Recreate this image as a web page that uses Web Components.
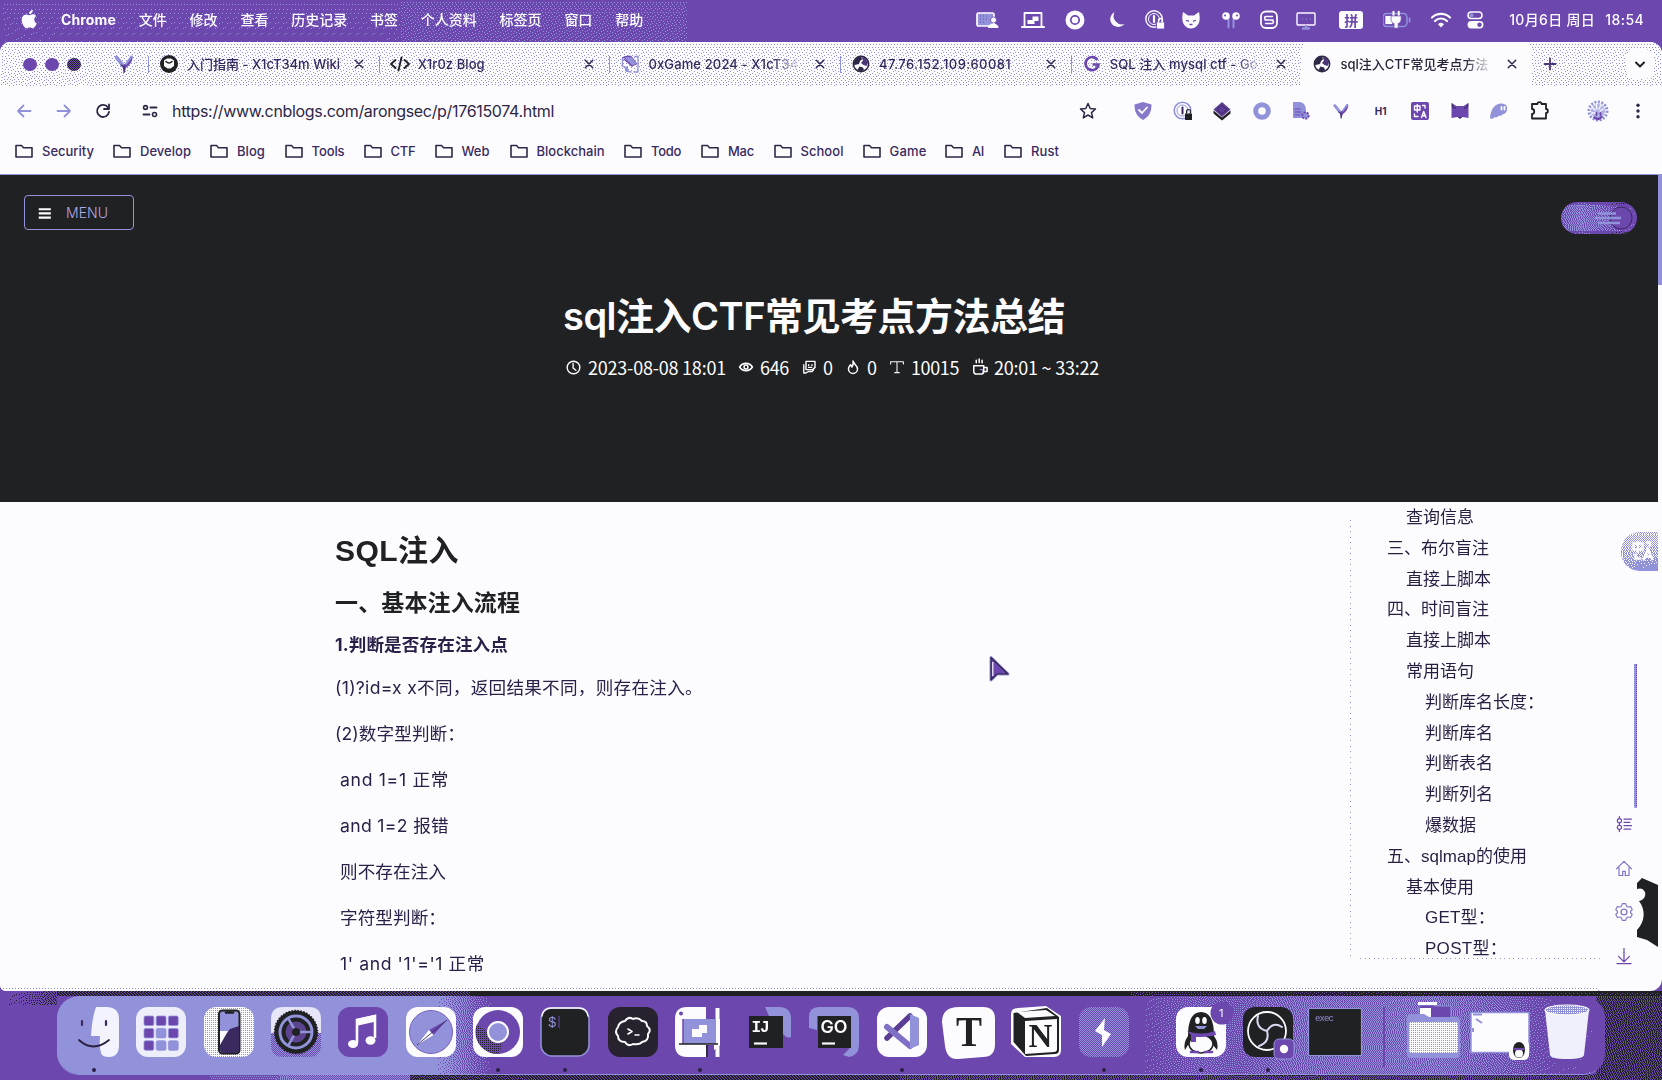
<!DOCTYPE html>
<html lang="zh-CN">
<head>
<meta charset="utf-8">
<title>sql注入CTF常见考点方法总结</title>
<style>
html,body{margin:0;padding:0;width:1662px;height:1080px;overflow:hidden}
body{background:#6c47ae;font-family:Inter,"Noto Sans CJK SC",sans-serif}
</style>
</head>
<body>
<desk-top></desk-top>
<script>
const TONES=[[32,33,34],[108,71,174],[146,146,218],[252,252,255]];
const ramp=(x,...s)=>{ // piecewise-linear lookup over x,value pairs
  if(x<=s[0])return s[1];
  for(let i=2;i<s.length;i+=2)if(x<=s[i]){const t=(x-s[i-2])/(s[i]-s[i-2]);return s[i-1]+(s[i+1]-s[i-1])*t}
  return s[s.length-1];
};
const FIELDS={
  menu:(x,y)=>x>686?1:x>400?1.13:ramp(y,0,1.07,42,1.03),
  tabs:(x,y)=>2.88-(y>30?.02:0),
  foot:(x,y)=>y<3?2.985:2.9,
  desk:(x,y)=>{
    if(x<57)return y<14?ramp(x,0,1,20,.9,57,.6):1;
    if(y<5)return x<470?.35:x<1130?0:ramp(x,1130,.2,1600,.1);
    if(x>1595)return .42;
    if(y>82)return x<210?1:x<280?1.25:x<410?1.5:x<900?.35:.55;
    return 1;
  },
  dock:(x,y)=>ramp(x,375,2,385,1.9,435,1,1080,1,1140,1.3,1180,1.25,1240,1.45,1380,1.55,1450,1.3,1500,1.02,1548,1),
  toggle:(x,y)=>ramp(x,0,1.35,20,1.6,50,1.3,76,1)-(y<3||y>28?.4:0),
  trans:(x,y)=>ramp(y,0,2.55,24,2.4,38,2.05)-(x>14&&y>25?.1:0)
};
class DitherFill extends HTMLElement{
  connectedCallback(){
    const w=+this.getAttribute('w'),h=+this.getAttribute('h'),f=FIELDS[this.getAttribute('field')];
    const r=this.attachShadow({mode:'open'});
    r.innerHTML='<style>:host{display:block;position:absolute;left:0;top:0;z-index:-1}canvas{display:block}</style><canvas></canvas>';
    const c=r.querySelector('canvas');c.width=w;c.height=h;
    const g=c.getContext('2d'),im=g.createImageData(w,h);
    let cur=new Float32Array(w+2),nxt=new Float32Array(w+2);
    for(let y=0;y<h;y++){
      for(let x=0;x<w;x++){
        const v=f(x,y)+cur[x+1];
        const q=Math.max(0,Math.min(3,Math.round(v))),e=Math.max(-1,Math.min(1,v-q));
        cur[x+2]+=e*7/16;nxt[x]+=e*3/16;nxt[x+1]+=e*5/16;nxt[x+2]+=e/16;
        const o=(y*w+x)*4,t=TONES[q];
        im.data[o]=t[0];im.data[o+1]=t[1];im.data[o+2]=t[2];im.data[o+3]=255;
      }
      cur=nxt;nxt=new Float32Array(w+2);
    }
    g.putImageData(im,0,0);
  }
}
customElements.define('dither-fill',DitherFill);

// A run of text tracked so that it spans exactly `w` pixels.
class FitText extends HTMLElement{
  connectedCallback(){
    const r=this.attachShadow({mode:'open'});
    r.innerHTML='<style>:host{display:inline-block;white-space:pre;flex:none}span{display:inline-block}</style><span><slot></slot></span>';
    const s=r.querySelector('span'),w=+this.getAttribute('w');
    if(!w)return;
    const n=[...this.textContent].length,nat=s.getBoundingClientRect().width;
    s.style.letterSpacing=((w-nat)/n).toFixed(3)+'px';
    this.style.width=w+'px';
  }
}
customElements.define('fit-text',FitText);

const K='#202122',P='#6c47ae',L='#9292da',W='#fcfcff';
const st=(c,w)=>`fill="none" stroke="${c}" stroke-width="${w}" stroke-linecap="round" stroke-linejoin="round"`;
const globe=`<circle cx="12" cy="12" r="7.600" fill="#fcfcff" stroke="#2d2745" stroke-width="1.6"/><path d="M5 10l3-4.500 4-1 1 3-2 1.500-1 3-2 .5-3 .5z" fill="#2d2745"/><path d="M12.500 5l4 1.500 2.500 4-1.500 3.500-3-1-2.500-2 2-2.500z" fill="#4c3678"/><path d="M8.500 18l2-3.500 3.500 1 1 2.500-3 1.500z" fill="#2d2745"/>`;
const ICONS={
apple:`<path fill="${W}" d="M16.200 12.600c0-2.300 1.900-3.400 2-3.500-1.100-1.600-2.800-1.800-3.400-1.800-1.400-.1-2.800.9-3.500.9s-1.900-.9-3-.8c-1.600 0-3 .9-3.800 2.300-1.600 2.800-.4 7 1.200 9.200.8 1.100 1.700 2.400 2.900 2.300 1.200 0 1.600-.7 3-.7s1.800.7 3 .7 2-1.100 2.800-2.200c.9-1.300 1.200-2.500 1.300-2.600-.1 0-2.500-1-2.500-3.800zM13.900 5.800c.6-.8 1.100-1.800.9-2.900-.9 0-2 .6-2.700 1.400-.6.7-1.100 1.800-1 2.800 1.100.1 2.100-.5 2.800-1.300z"/>`,
share:`<rect x="2" y="5" width="17" height="13" rx="1.500" fill="${L}" stroke="${W}" stroke-width="1.700"/><path d="M5 8h1M8 8h1M11 8h1M5 11h1M8 11h1M11 11h1M5 14h1M8 14h1" stroke="${P}"/><circle cx="18.500" cy="12" r="3" fill="${W}" stroke="${P}" stroke-width=".8"/><path d="M13 20c0-6 10.500-6 10.500 0z" fill="${W}"/>`,
laptop:`<path d="M3.500 18V5h17v13" ${st(W,1.8)}/><path d="M1 19h22" ${st(W,2)}/><path d="M6.500 12h5V8.500h6V13h-4v3h-7z" fill="${W}"/>`,
donut:`<circle cx="12" cy="12" r="9.500" fill="${W}"/><circle cx="12" cy="12" r="4.200" fill="${W}" stroke="${P}" stroke-width="1.700"/>`,
moon:`<path d="M9.500 4a8 8 0 1 0 10 12A8.500 8.500 0 0 1 9.500 4z" fill="${W}"/>`,
onepw:`<circle cx="11" cy="11" r="8.200" ${st(W,1.4)}/><circle cx="11" cy="11" r="5.500" ${st(W,1)}/><path d="M11 8v6" ${st(W,2.2)}/><rect x="13.500" y="14" width="8" height="7" rx="1" fill="${W}" stroke="${P}" stroke-width=".8"/><path d="M15.500 14v-1.500a2 2 0 0 1 4 0V14" ${st(W,1.3)}/>`,
cat:`<path d="M4 4l5 3.500h6L20 4c.8 4 .8 6 .5 8.500C20 17 16 20.500 12 20.500S4 17 3.500 12.500C3.200 10 3.200 8 4 4z" fill="${W}"/><path d="M7.500 12.500l2 .7M16.500 12.500l-2 .7M11 16.500h2" ${st(P,1.3)}/>`,
pods:`<path d="M9.500 11v8.500M14.500 11v8.500" ${st(L,2)}/><circle cx="7" cy="8" r="3.800" fill="${W}"/><circle cx="17" cy="8" r="3.800" fill="${W}"/><circle cx="6" cy="7.500" r="1" fill="${P}"/><circle cx="18" cy="7.500" r="1" fill="${P}"/>`,
sbox:`<rect x="4" y="3.500" width="16" height="16.500" rx="5" ${st(W,1.8)}/><path d="M15.500 8.500H9a1.500 1.500 0 0 0 0 3M8.500 15.500H15a1.500 1.500 0 0 0 0-3M8 12h8" ${st(W,1.5)}/>`,
display:`<rect x="3" y="5" width="18" height="12" rx="1" ${st(W,1.4)}/><path d="M9 20.500h6M12 18v2" ${st(L,2.4)}/><path d="M8 11h1M12 11h1M16 11h1" stroke="${L}" stroke-width="1"/>`,
batt:`<rect x="0" y="6.500" width="20.500" height="11" rx="3" fill="none" stroke="${L}" stroke-width="1.300"/><path d="M2 8.500h6v7H2z" fill="${W}"/><path d="M9 9V5M13.500 9V5" ${st(W,1.8)}/><path d="M7 8.500h8.500c.5 4-.5 6-2.500 6.500v4h-3.500v-4C7.500 14.500 6.500 12.500 7 8.500z" fill="${W}" stroke="${P}" stroke-width=".6"/><path d="M22.800 10.500v3" ${st(L,1.5)}/>`,
wifi:`<path d="M3 9.500a13 13 0 0 1 18 0M6 13a8.500 8.500 0 0 1 12 0" ${st(W,2.2)}/><path d="M9 16.200a4.300 4.300 0 0 1 6 0L12 19.500z" fill="${W}"/>`,
cc:`<rect x="5" y="4" width="14" height="6.500" rx="3.200" ${st(W,1.5)}/><circle cx="8.500" cy="7.200" r="2" fill="${L}"/><rect x="4.500" y="13" width="16" height="7.500" rx="3.700" fill="${W}"/><circle cx="16.500" cy="16.700" r="2.200" fill="${P}"/>`,
globe,
wiki:`<circle cx="12" cy="12" r="9" fill="${K}"/><path d="M7 8.500l3-2h4l3 2v5.500l-3.500 2.500h-3L7 14z" fill="${W}"/><path d="M9 9.500q3 3 6 0" ${st(K,1.6)}/>`,
code:`<path d="M7.500 8L3 12l4.500 4M16.500 8l4.500 4-4.500 4M13.500 5.500l-3 13" ${st(K,1.9)}/>`,
ox:`<path d="M6 5l7-1 6 8-5 2z" fill="${L}" stroke="${P}" stroke-width=".8"/><path d="M4.500 6v8l3 2M17 4.500h3V20h-4M8 15v4l5 1" ${st(L,1.3)}/><path d="M5 5.500l5-1.500 2 1M6 7l8 7" ${st(P,1.3)}/><path d="M7 15h3v4H7z" fill="${L}"/>`,
g:`<path d="M17.500 8A6.500 6.500 0 1 0 18.500 12.500H12.500" fill="none" stroke="${P}" stroke-width="2.600"/>`,
vee:`<path d="M4.500 5.500l7 8.500" ${st(L,3.6)}/><path d="M19.500 5l-6 8.500" ${st(L,3)}/><path d="M20.500 5c0 5-3 8-6.500 11L12.500 21l-1.800-5.500L12 12l2.500 1z" fill="${P}"/><path d="M9 13l3 2v5.500" ${st('#3a2a60',1.2)}/>`,
x:`<path d="M7.500 7.500l9 9M16.500 7.500l-9 9" ${st('#32284e',1.8)}/>`,
plus:`<path d="M12 6.500v11M6.500 12h11" ${st('#4a3878',1.8)}/>`,
chev:`<path d="M8 10.500l4 4 4-4" ${st(K,2)}/>`,
back:`<path d="M18.500 12H6M11.500 6.500L6 12l5.500 5.500" ${st(L,1.8)}/>`,
fwd:`<path d="M5.500 12H18M12.500 6.500L18 12l-5.500 5.500" ${st(L,1.8)}/>`,
reload:`<path d="M17 8.500A6 6 0 1 0 18 13" ${st('#2d2745',1.8)}/><path d="M18 5.500v4.500h-5" ${st('#2d2745',1.8)}/>`,
tune:`<path d="M12.500 8.500H18.500M5.500 15.500H11.500" ${st('#2d2745',1.8)}/><circle cx="7.500" cy="8.500" r="1.900" ${st('#2d2745',1.6)}/><circle cx="16.500" cy="15.500" r="2" ${st('#2d2745',1.6)}/>`,
star:`<path d="M12 4.500l2.200 5 5.300.5-4 3.600 1.200 5.300L12 16l-4.700 2.900 1.200-5.300-4-3.600 5.300-.5z" ${st('#2d2745',1.5)}/>`,
shield:`<path d="M3.500 5.500L12 3l8.500 2.500c0 7-2 12-8.500 15.500C5.500 17.500 3.500 12.500 3.500 5.500z" fill="#8878ca"/><path d="M8 11l3 3 5-5.500" ${st(W,1.8)}/>`,
pw2:`<circle cx="11.500" cy="11.500" r="8.300" ${st(L,1.6)}/><circle cx="11.500" cy="11.500" r="5.500" ${st(L,1)}/><path d="M11.500 8.500v6" ${st('#3a2a60',2)}/><rect x="14" y="14.500" width="7" height="6.500" fill="${K}"/><path d="M15.500 14v-1.500a2 2 0 0 1 4 0V14" ${st(K,1.1)}/>`,
stack:`<path d="M12 3l8.500 7.500-8.500 7.500-8.500-7.500z" fill="#5c3d94"/><path d="M3.500 11.500L12 18.500l8.500-7V14.500L12 21.500 3.500 14.500z" fill="${K}"/><path d="M7 10.500l5-4.500 5 4.500-5 4.500z" fill="none" stroke="#3a2a60"/>`,
ring:`<circle cx="12" cy="12" r="6.300" fill="none" stroke="${L}" stroke-width="5"/>`,
doc:`<path d="M4 3h7c5 1 6 5 6 9v7H4z" fill="${L}"/><path d="M6 10h5M6 13h6M6 16h5" ${st(P,1)}/><circle cx="16.500" cy="16.500" r="3.200" fill="${L}" stroke="${P}" stroke-width="1.800" stroke-dasharray="2 1.200"/>`,
trans:`<rect x="3" y="3" width="18" height="18" rx="2" fill="${P}"/><path d="M6.500 7h5.500v4H6.500zM9.300 5.500V13M13.500 18.500l2.200-6 2.300 6M14.300 16.800h3M14.500 6.500h2.500v2.500M6.500 15v2.500h3.500" ${st(W,1.4)}/>`,
fox:`<path d="M3.500 4l5 3h7l5-3v15l-6-1-2.500 2-2.500-2-6 1z" fill="${P}"/><path d="M4.500 5v3l3 1M19.500 5v3l-3 1M11 18.500h2" ${st('#3a2a60',1.2)}/>`,
ghost:`<path d="M3 18.500C4 9 9 4 15 4.500c6 .5 6 6 4 9-2 2-3 1-4 2.500s-3 0-4 1.500-3 0-4 1.300-4 1.500-4-.3z" fill="${L}"/><path d="M14.500 8v2.500M17.500 8v2.500" ${st(W,1.8)}/>`,
puzzle:`<path d="M5 5h5.500c0-2.500 4-2.500 4 0H19v5c2.500 0 2.500 4 0 4v5.500H5V15c3 0 3-5 0-5z" ${st(K,1.8)}/>`,
profile:`<circle cx="12" cy="12" r="9" fill="none" stroke="${L}" stroke-width="3" stroke-dasharray="2 1.500"/><circle cx="12" cy="12" r="7" fill="${L}" opacity=".7"/><path d="M6 8l3 3M10 5l1 5M15 6l-2 4M17 10l-3 2M6 14l3 0" ${st(W,1.3)}/><path d="M8.500 18.500q4 3 7-.5" ${st(P,2.4)}/><path d="M10.500 14v2M14.500 14v2" ${st(P,1.8)}/>`,
dots:`<circle cx="12" cy="6.200" r="1.700" fill="#2d2745"/><circle cx="12" cy="12" r="1.700" fill="#2d2745"/><circle cx="12" cy="17.800" r="1.700" fill="#2d2745"/>`,
folder:`<path d="M4 6.500h5.500l2 2.200h8.500v9.300H4z" ${st('#2d2745',1.6)}/>`,
burger:`<path d="M4.500 7.500h14.500M4.500 12.500h14.500M4.500 17.500h14.500" stroke="${W}" stroke-width="2.600"/>`,
clock:`<circle cx="12" cy="12" r="8" ${st(W,1.8)}/><path d="M11.500 7v5.500l3.500 3" ${st(W,1.7)}/>`,
eye:`<path d="M3.500 12c4-6.500 13-6.500 17 0-4 6.500-13 6.500-17 0z" ${st(W,2.200)}/><circle cx="12" cy="12" r="2.600" ${st(W,2)}/>`,
talk:`<path d="M8 4.500h12v8l-3 3H8z" ${st(W,1.9)}/><path d="M5 9v11h3l3-2h5l2-2M11.500 9v1M16 9v1M11.500 12.500h4" ${st(W,1.8)}/>`,
fire:`<path d="M12 4c1 4 6 6 6 10.500a6 6 0 0 1-12 0C6 12 8 10.500 8.500 9c1 .5 1.500 1.500 2 3C12 10 12.500 7 12 4z" ${st(W,2)}/>`,
tee:`<path d="M3.500 8V5h17v3M12 5v14.500M9 19.500h6" ${st(W,1.4)}/>`,
cup:`<path d="M4.500 10.500h12v7a3 3 0 0 1-3 3h-6a3 3 0 0 1-3-3zM16.500 12.500h4v5h-4M7.500 4v3M11 2.500v4M14.500 4v3" ${st(W,1.8)}/><path d="M12 15h3v3" ${st(L,1.3)}/>`,
list:`<path d="M6.500 3v18M12 6h9M12 10h7M12 14h9M12 18h8" ${st(P,1.5)}/><circle cx="6.500" cy="8" r="2.500" fill="${W}" stroke="${P}" stroke-width="1.400"/><circle cx="6.500" cy="16" r="2.500" fill="${W}" stroke="${P}" stroke-width="1.400"/>`,
home:`<path d="M3 13L12 4l9 9M6 11.500V21h4.500v-5h3v5H18v-9.500" ${st('#8070c6',1.4)}/>`,
gear:`<path d="M10 2h4l1 2.900 1.900 1.100 3-.5 2 3.500-2 2.200v1.700l2 2.200-2 3.500-3-.6-1.900 1.100L14 22h-4l-1-2.900-1.900-1.100-3 .6-2-3.500 2-2.200v-1.700l-2-2.200 2-3.500 3 .5L9 4.900z" ${st('#8676c9',1.4)}/><circle cx="12" cy="12" r="3.500" ${st('#8676c9',1.6)}/>`,
down:`<path d="M12 3V19M5.500 12.500L12 19l6.500-6.500M3.500 21h17" ${st(P,1.5)}/>`,
};
class UiIcon extends HTMLElement{
  connectedCallback(){
    const s=this.getAttribute('size')||24;
    this.attachShadow({mode:'open'}).innerHTML=`<style>:host{display:block;flex:none;width:${s}px;height:${s}px}svg{display:block}</style><svg width="${s}" height="${s}" viewBox="0 0 24 24">${ICONS[this.getAttribute('name')]}</svg>`;
  }
}
customElements.define('ui-icon',UiIcon);
const ic=(n,s=24,style='')=>`<ui-icon name="${n}" size="${s}" style="${style}"></ui-icon>`;
const define=(tag,html)=>customElements.define(tag,class extends HTMLElement{
  connectedCallback(){this.attachShadow({mode:'open'}).innerHTML=html}
});

const menus=[['文件',28],['修改',28],['查看',28],['历史记录',56],['书签',28],['个人资料',56],['标签页',42],['窗口',28],['帮助',28]];
const status=[['share',0],['laptop',22],['donut',18],['moon',18],['onepw',14],['cat',12],['pods',16],['sbox',14],['display',13]];
define('menu-bar',`<style>
:host{display:flex;align-items:center;height:42px;position:relative;z-index:0;color:#fcfcff;font-size:14px;line-height:20px;padding-bottom:2px;box-sizing:border-box;flex:none}
nav{display:flex;gap:22.8px;margin-left:19px;font-weight:500}
nav b{font-weight:700}
.st{display:flex;align-items:center;margin-left:332px;height:24px}
.ime{width:24px;height:18px;border-radius:3px;background:#fcfcff;color:#6c47ae;font:700 14px/18px "Noto Sans CJK SC",sans-serif;text-align:center;margin-left:21px}
.t{margin-left:22px;font-weight:500}
</style><dither-fill field="menu" w="1662" h="42"></dither-fill>
${ic('apple',24,'margin:-2px 0 0 18px')}
<nav><b><fit-text w="55">Chrome</fit-text></b>${menus.map(m=>`<fit-text w="${m[1]}">${m[0]}</fit-text>`).join('')}</nav>
<div class="st">${status.map(s=>ic(s[0],24,`margin-left:${s[1]}px`)).join('')}<div class="ime">拼</div>${ic('batt',28,'margin-left:20px')}${ic('wifi',24,'margin-left:18px')}${ic('cc',24,'margin-left:10px')}
<div class="t"><fit-text w="86">10月6日 周日</fit-text></div><div style="margin-left:10px;font-weight:500"><fit-text w="39">18:54</fit-text></div></div>`);

const tabs=[['wiki','入门指南 - X1cT34m Wiki',153],['code','X1r0z Blog',67],['ox','0xGame 2024 - X1cT34',150,1],['globe','47.76.152.109:60081',132],['g','SQL 注入 mysql ctf - Go',148,1],['globe','sql注入CTF常见考点方法',148,1]];
define('tab-strip',`<style>
:host{display:flex;height:44px;position:relative;z-index:0;align-items:center;flex:none}
.lights{display:flex;gap:8.500px;margin-left:23px;width:90px}
.lights i{width:13.500px;height:13px;border-radius:50%;background:#6c47ae}
.lights i:nth-child(3){background:repeating-conic-gradient(#202122 0 25%,#6c47ae 0 50%) 0 0/2px 2px}
.tab{width:230.700px;height:44px;box-sizing:border-box;display:flex;align-items:center;padding:0 10px 1px 9px;flex:none;position:relative;color:#35285a;font-size:13px;font-weight:500}
.tab:before{content:"";position:absolute;left:0;top:14px;height:17px;border-left:1px solid #9292da}
.tab .n{flex:1;margin-left:6px;white-space:pre;overflow:hidden}
.fade{-webkit-mask:linear-gradient(90deg,#000 125px,transparent 152px)}
.on{background:#fcfcff;border-radius:9px 9px 0 0;color:#2a2438}
.on:before{display:none}
.cv{margin-left:auto;margin-right:8px;background:#fcfcff;border-radius:9px;padding:3px 2px}
</style><dither-fill field="tabs" w="1662" h="44"></dither-fill>
<div class="lights"><i></i><i></i><i></i></div>${ic('vee',24,'margin:0 12px 0 -1px')}
${tabs.map((t,i)=>`<div class="tab ${i==5?'on':''}">${ic(t[0],24)}<div class="n"><div class="${t[3]?'fade':''}"><fit-text w="${t[2]}">${t[1]}</fit-text></div></div>${ic('x',20)}</div>`).join('')}
${ic('plus',24,'margin:-1px 0 0 6px')}<div class="cv">${ic('chev',24)}</div>`);

define('tool-bar',`<style>
:host{display:flex;align-items:center;height:50px;flex:none;padding-left:12px;color:#2d2745;font-size:16px}
.ext{display:flex;gap:15.600px;margin-left:31px;align-items:center}
.h1{width:24px;text-align:center;font:700 10px/24px Inter,sans-serif;color:#35285a}
</style>${ic('back')}${ic('fwd',24,'margin-left:16px')}${ic('reload',24,'margin-left:15px')}${ic('tune',24,'margin-left:23px')}
<fit-text w="382" style="margin-left:10px">https://www.cnblogs.com/arongsec/p/17615074.html</fit-text>
${ic('star',24,'margin-left:522px')}
<div class="ext">${['shield','pw2','stack','ring','doc'].map(n=>ic(n)).join('')}${ic('vee',20,'margin:0 2px')}<div class="h1">H1</div>${['trans','fox','ghost','puzzle'].map(n=>ic(n)).join('')}</div>
${ic('profile',24,'margin-left:35px')}${ic('dots',24,'margin-left:16px')}`);

const marks=[['Security',52,15],['Develop',51,113],['Blog',28,210],['Tools',33,284.500],['CTF',25,363.500],['Web',28,434.500],['Blockchain',68,509.500],['Todo',30,624],['Mac',26,701],['School',43,773.500],['Game',37,862.500],['AI',12,945],['Rust',28,1004]];
define('bookmark-bar',`<style>
:host{display:flex;align-items:center;height:39px;flex:none;padding:0 0 8px 12px;box-sizing:border-box;color:#3a2a60;font-size:13px;font-weight:500;border-bottom:1px solid #9292da}
div{display:flex;align-items:center;gap:6px;flex:none}
</style>${marks.map((m,i)=>{const w=i<12?marks[i+1][2]-m[2]:70;return `<div style="width:${w}px">${ic('folder')}<fit-text w="${m[1]}">${m[0]}</fit-text></div>`}).join('')}`);

define('page-hero',`<style>
:host{display:flex;flex-direction:column;height:327px;width:1658px;background:#202122;color:#fcfcff;flex:none;position:relative}
.menu{width:110px;height:35px;box-sizing:border-box;border:1px solid #9292da;border-radius:4px;margin:20px 0 0 24px;display:flex;align-items:center;color:#b4a8e4;font-size:14px;font-weight:300}
.tg{position:absolute;left:1561px;top:27px;width:76px;height:32px;border-radius:16px;overflow:hidden;z-index:0}
.tg svg{display:block}
h1{font:600 38px/50px Inter,"Noto Sans CJK SC",sans-serif;margin:61px 0 0 563px;height:50px}
.m{display:flex;align-items:center;margin:14px 0 0 564px;font:400 18px/24px "Noto Sans CJK SC",sans-serif;height:24px}
</style>
<div class="menu">${ic('burger',20,'margin:1px 11px 0 10px')}<fit-text w="42">MENU</fit-text></div>
<div class="tg"><dither-fill field="toggle" w="76" h="32"></dither-fill><svg width="76" height="32"><circle cx="60" cy="16" r="11" fill="#6c47ae" stroke="#3a2a60"/><path d="M37 11.500h18M34 16h26M37 21h22" stroke="#9292da" stroke-width="2.500"/></svg></div>
<h1><fit-text w="502">sql注入CTF常见考点方法总结</fit-text></h1>
<div class="m">${ic('clock',19)}<fit-text w="138" style="margin-left:5px">2023-08-08 18:01</fit-text>
${ic('eye',18,'margin-left:11px')}<fit-text w="29" style="margin-left:5px">646</fit-text>
${ic('talk',18,'margin-left:11px')}<fit-text w="10" style="margin-left:5px">0</fit-text>
${ic('fire',18,'margin-left:11px')}<fit-text w="10" style="margin-left:5px">0</fit-text>
${ic('tee',18,'margin-left:11px')}<fit-text w="48" style="margin-left:5px">10015</fit-text>
${ic('cup',20,'margin-left:11px')}<fit-text w="105" style="margin-left:4px">20:01 ~ 33:22</fit-text></div>`);

define('article-body',`<style>
:host{display:block;width:1350px;flex:none;padding:25px 0 0 335px;box-sizing:border-box;color:#2b2148}
h1,h2,h3,p{margin:0;white-space:pre}
h1{font:700 30px/48px "Liberation Sans","Noto Sans CJK SC",sans-serif;height:47px;color:#202122}
h2{font:700 23px/54px "Noto Sans CJK SC",sans-serif;height:57px;color:#202122}
h3{font:700 17.600px/28px Inter,"Noto Sans CJK SC",sans-serif;height:28px;margin-bottom:6px}
p{font:400 17.600px/46px Inter,"Noto Sans CJK SC",sans-serif;height:46px}
.i{padding-left:5px}
</style><h1><fit-text w="124">SQL注入</fit-text></h1><h2><fit-text w="185">一、基本注入流程</fit-text></h2><h3><fit-text w="173">1.判断是否存在注入点</fit-text></h3>
<p><fit-text w="368">(1)?id=x x不同，返回结果不同，则存在注入。</fit-text></p><p><fit-text w="130">(2)数字型判断：</fit-text></p><p class="i"><fit-text w="109">and 1=1 正常</fit-text></p><p class="i"><fit-text w="109">and 1=2 报错</fit-text></p><p class="i"><fit-text w="106">则不存在注入</fit-text></p><p class="i"><fit-text w="106">字符型判断：</fit-text></p><p class="i"><fit-text w="145">1' and '1'='1 正常</fit-text></p>`);

const toc=[[1,'查询信息',68],[0,'三、布尔盲注',102],[1,'直接上脚本',85],[0,'四、时间盲注',102],[1,'直接上脚本',85],[1,'常用语句',68],[2,'判断库名长度：',119],[2,'判断库名',68],[2,'判断表名',68],[2,'判断列名',68],[2,'爆数据',51],[0,'五、sqlmap的使用',140],[1,'基本使用',68],[2,'GET型：',70],[2,'POST型：',82]];
define('side-toc',`<style>
:host{display:block;width:254px;height:457px;box-sizing:border-box;padding-top:1px;flex:none;position:relative;color:#281e42;font:400 17px/30.800px "Liberation Sans","Noto Sans CJK SC",sans-serif}
:host:before{content:"";position:absolute;left:0;top:18px;height:438px;border-left:1px solid #9292da;-webkit-mask:repeating-linear-gradient(#000 0 1px,transparent 1px 6px,#000 6px 7px,transparent 7px 11px)}
:host:after{content:"";position:absolute;left:10px;width:243px;top:456px;height:1px;background:repeating-linear-gradient(90deg,#9292da 0 1px,transparent 1px 5px,#9292da 5px 6px,transparent 6px 9px)}
div{height:30.800px}
</style>${toc.map(t=>`<div style="padding-left:${37+t[0]*19}px"><fit-text w="${t[2]}">${t[1]}</fit-text></div>`).join('')}`);

define('side-rail',`<style>
:host{display:block;position:absolute;left:1603px;top:0;width:59px;height:489px}
.tr{position:absolute;left:18px;top:30px;width:37px;height:39px;border-radius:19px 0 0 19px;overflow:hidden;z-index:0}
.bar{position:absolute;left:31px;top:162px;width:3px;height:144px;background:#9292da;border-radius:0 0 2px 2px;border-right:1px dotted #6c47ae;box-sizing:border-box}
.tools{position:absolute;left:9px;top:312px;display:flex;flex-direction:column;gap:24px;align-items:center;width:24px}
svg{position:absolute;left:34px;top:374px}
.tr svg{left:0;top:0}
</style>
<div class="tr"><dither-fill field="trans" w="37" h="39"></dither-fill><svg width="37" height="39"><path d="M12.500 11.500h9v6h-9zM17 9v12M22.500 28l4.500-11 4.500 11M24 24.500h6M25 10.500h4v4M14.500 21.500v5h6" fill="none" stroke="#fcfcff" stroke-width="2.400"/></svg></div>
<div class="bar"></div>
<svg width="21" height="72" viewBox="0 0 21 72"><path d="M0 7L5 2 21 9V71L10 64 0 61V54C8 46 9 34 2 25 7 24 9 20 8 16 6 12 3 12 0 13z" fill="#202122"/></svg>
<div class="tools">${ic('list',20)}${ic('home',20)}${ic('gear',20)}${ic('down',20)}</div>`);

define('mouse-pointer',`<style>:host{display:block;position:absolute;left:988px;top:152px}</style><svg width="24" height="30" viewBox="0 0 24 30"><path d="M3 3.500v22.500l6-6h11z" fill="#6c47ae" stroke="#9292da" stroke-width="3" stroke-linejoin="round"/><path d="M3 3.500v22.500l6-6h11z" fill="#6c47ae" stroke="#2a2040" stroke-width="1.100" stroke-linejoin="round"/><path d="M4.800 8v14" stroke="#fcfcff" stroke-width="1.200"/></svg>`);

define('browser-window',`<style>
:host{display:flex;flex-direction:column;height:949px;background:#fcfcff;border-radius:10px 12px 12px 6px;overflow:hidden;flex:none;position:relative;z-index:0}
main{display:flex;height:489px;position:relative;z-index:0}
.sb{position:absolute;right:0;top:133px;width:4px;height:110px;background:#9292da}
.ft{position:absolute;left:0;top:941px;width:1662px;height:8px;z-index:0}
</style><tab-strip></tab-strip><tool-bar></tool-bar><bookmark-bar></bookmark-bar><page-hero></page-hero>
<div class="ft"><dither-fill field="foot" w="1600" h="8"></dither-fill></div><div class="sb"></div>
<main><article-body></article-body><side-toc></side-toc><side-rail></side-rail><mouse-pointer></mouse-pointer></main>`);

const tile=(bg,inner='')=>`<rect x="5" y="5" width="50" height="50" rx="12" fill="${bg}"/>${inner}`;
let grid='';
[[P,P,P],[P,L,P],[P,L,L]].forEach((r,j)=>r.forEach((c,i)=>grid+=`<rect x="${13+i*12.2}" y="${14+j*12.4}" width="9.800" height="9.500" rx="1.500" fill="${c}" stroke="${L}" stroke-width=".8"/>`));
let spokes='';
for(let i=0;i<3;i++)spokes+=`<path d="M30 30L46 30" transform="rotate(${i*120} 30 30)" stroke="${L}" stroke-width="2.500"/>`;
const tex=(bg,dot,id)=>`<pattern id="${id}" width="2" height="2" patternUnits="userSpaceOnUse"><rect width="2" height="2" fill="${bg}"/><rect width="1" height="1" fill="${dot}"/></pattern>`;
const APPS={
finder:`<path d="M42 5q13 0 13 12v26q0 12-10 12-7 0-8-4-2-7-1-17h-9q1-18 5-29z" fill="#f3f3fd"/><path d="M18 19v4M42 19v4" ${st('#3a2a60',2.2)}/><path d="M15 38q14 13 30 0" ${st('#2a2040',1.8)}/>`,
launch:tile('#eeeefb',grid),
phone:tile('url(#wl)',`<rect x="20" y="8.500" width="20.500" height="43" rx="3.500" fill="${L}" stroke="${K}" stroke-width="2"/><path d="M21 40L31 27 40 24V47q0 4-4 4H25q-4 0-4-4z" fill="#3a2a60"/><path d="M21 43V29h8z" fill="${W}"/><path d="M27 10.500h7" ${st(K,2.6)}/>`),
prefs:`<path d="M5 17Q5 5 17 5h26q12 0 12 12v14H5z" fill="#e6e6f8"/><path d="M5 31h50v12q0 12-12 12H17Q5 55 5 43z" fill="url(#lp)"/><circle cx="30" cy="30" r="19.500" fill="${L}" stroke="${K}" stroke-width="4"/><circle cx="30" cy="30" r="12.500" fill="#5b4390" stroke="${K}" stroke-width="4"/>${spokes}<circle cx="30" cy="30" r="4" fill="${K}"/><circle cx="30" cy="30" r="21.500" fill="none" stroke="${K}" stroke-width="1.500" stroke-dasharray="1.500 1.500"/>`,
music:tile(P,`<path d="M24 41V18l18-4v22" fill="none" stroke="${W}" stroke-width="2.600"/><path d="M23 17l20-4.500v7L23 24z" fill="${W}"/><ellipse cx="20" cy="42" rx="5" ry="4" fill="${W}"/><ellipse cx="37.500" cy="38.500" rx="5" ry="4.200" fill="${W}"/>`),
safari:tile(W,`<circle cx="30" cy="30" r="21.500" fill="${L}" stroke="#7c62bc"/><path d="M46 18L32.500 33 28 28z" fill="${P}"/><path d="M16 43l12-15 4.500 5z" fill="${W}"/><path d="M46 18L16 43" stroke="#3a2a60" stroke-width=".9"/>`),
chrome:tile(W,`<circle cx="30" cy="30" r="22" fill="${P}"/><path d="M9 22A22 22 0 0 0 31 52L35 40q-9 0-13-8z" fill="url(#pk)"/><circle cx="30" cy="30" r="10" fill="${L}" stroke="${W}" stroke-width="2"/>`),
term:`<rect x="6" y="6" width="48" height="48" rx="11" fill="${K}" stroke="${L}" stroke-width="1.500"/><path d="M7 14q1-8 9-8h28q8 0 9 8" ${st(W,1.4)}/><path d="M24 14v12" stroke="${P}" stroke-width="1"/><text x="13" y="25" font-family="Liberation Mono" font-size="14" fill="${L}">$</text>`,
gpt:tile('#28222f',`<path d="M22 19q3-5 8-2 5-2 9 2 5 0 5 5 5 4 1 8 1 7-6 8-2 3-9 2-5 3-8-2-7 0-7-6-4-4 0-9 1-5 7-6z" ${st(W,2)}/><path d="M25 27l4 2.500-4 2.500M32 33h4" ${st(W,1.6)}/>`),
vm:`<path d="M5 17Q5 5 17 5h19v12h14v26l-14 12H17Q5 55 5 43z" fill="${W}"/><rect x="45.500" y="6" width="4" height="49" fill="${W}"/><rect x="36" y="5" width="8" height="11" fill="${P}"/><rect x="36" y="43" width="8" height="12" fill="${P}"/><path d="M13 17h33v25H13z" fill="${L}"/><path d="M13 42V17" stroke="${P}" stroke-width="1.500"/><path d="M22 27h7v-4h8v8h-5v4H22z" fill="${W}"/><path d="M9 42h39M37 43v12" stroke="${K}" stroke-width="1.500"/><circle cx="11" cy="11.500" r="2" fill="${P}"/>`,
ij:`<path d="M28 5h14q12 0 12 12v18q-4 2-8-3V14H32z" fill="${L}"/><path d="M12 14h34v32H12z" fill="${K}"/><text x="14.500" y="29.500" font-family="Liberation Mono" font-weight="700" font-size="16" textLength="18" fill="${W}">IJ</text><path d="M17 41.500h13" stroke="${W}" stroke-width="2.200"/>`,
go:`<path d="M5 26V15Q5 5 15 5h28q12 0 12 12v26q0 10-10 12l-6-2 6-6V14H13v14z" fill="${L}"/><path d="M14 14h33v32H14z" fill="${K}"/><text x="16.500" y="30.500" font-family="Inter" font-weight="600" font-size="17.500" textLength="27" lengthAdjust="spacingAndGlyphs" fill="${W}">GO</text><path d="M18 41.500h13" stroke="${W}" stroke-width="2.200"/>`,
code:tile(W,`<path d="M15 36L38 14" stroke="#5c3d94" stroke-width="5.500" stroke-linecap="round"/><path d="M15 25L38 44" stroke="#8070c6" stroke-width="6" stroke-linecap="round"/><path d="M38 12l9 4v27l-9 4z" fill="${L}"/>`),
typora:`<path d="M3 20Q3 5 20 5h24q12 0 12 12v25q0 13-12 13l-25 2Q8 58 6 44z" fill="${W}"/><text x="30" y="44" text-anchor="middle" font-family="Liberation Serif" font-weight="700" font-size="42" textLength="26" lengthAdjust="spacingAndGlyphs" fill="${K}">T</text>`,
notion:`<path d="M5 12Q5 6 12 6l28-2 15 10v34q0 7-7 7H19L5 42z" fill="${W}"/><path d="M7.500 11L41 6l12 9v33q0 4-4 4l-29 2L7.500 40z" fill="${K}"/><path d="M11 10l29-2 9 6-30 2z" fill="${W}"/><path d="M19 19l32-2v30q0 3-3 3l-29 2z" fill="${W}"/><text x="34.500" y="44.500" text-anchor="middle" font-family="Liberation Serif" font-weight="700" font-size="33" fill="${K}">N</text>`,
bolt:tile('url(#lp)',`<path d="M31 16L21 29l7 4v12l9-13-7-4z" fill="${W}"/>`),
qq:tile(W,`<path d="M17 43l-3 5q-2-7 3-14 0-24 13-24t13 24q5 7 3 14l-4-5z" fill="${K}"/><ellipse cx="30" cy="42" rx="12" ry="9" fill="${W}" stroke="${K}" stroke-width="1.500"/><path d="M16 29q14 5 28 0l1 4q-7 2-20 2v5h-5v-7z" fill="${P}"/><ellipse cx="26.500" cy="18.500" rx="2.300" ry="3.500" fill="${W}"/><ellipse cx="33.500" cy="18.500" rx="2.300" ry="3.500" fill="${W}"/><path d="M24 24h12l-3 3h-6z" fill="${L}"/><path d="M20 50h7M34 50h7" ${st(P,2.6)}/>`)+`<circle cx="51" cy="11" r="11.500" fill="${P}"/><text x="48" y="15" font-family="Inter" font-size="11" fill="${W}">1</text>`,
obs:tile(K,`<circle cx="29" cy="29" r="19" ${st(W,1.8)}/><path d="M29 29q-12-3-9-15M29 29q6-10 15-4M29 29q3 11-8 15" ${st('#d8d8f2',2)}/>`)+`<rect x="36" y="37" width="20" height="20" rx="5" fill="${P}" stroke="${L}" stroke-width="1"/><circle cx="46" cy="47" r="4.200" fill="${W}"/>`,
exec:`<rect x="3.500" y="6.500" width="53" height="47" rx="1" fill="${K}" stroke="${L}" stroke-width="1.200"/><text x="10" y="19" font-family="Liberation Mono" font-size="9" textLength="19" fill="${L}">exec</text>`,
down:`<path d="M16 3h14l3 1h15v12H16z" fill="${P}" stroke="${L}"/><path d="M15 0h19v3H15zM17 6h11v10H17z" fill="${W}"/><path d="M4 16q0-4 4-4h13l5 3h27q4 0 4 4v32q0 5-4 5H8q-4 0-4-5z" fill="${L}"/><rect x="6" y="20" width="49" height="31" rx="3" fill="url(#wl)"/>`,
win:`<rect x="1" y="10.500" width="58" height="40" fill="${W}" stroke="${L}" stroke-width="1.500"/><path d="M6 17l6 4M3 12.500h9M3 26v4" stroke="${L}" stroke-width="2"/><rect x="39" y="38" width="20" height="20" rx="5" fill="${W}"/><ellipse cx="49" cy="48" rx="6" ry="8" fill="${K}"/><ellipse cx="49" cy="51.500" rx="4" ry="4" fill="${W}"/><path d="M43.500 47h11" stroke="${P}" stroke-width="2.200"/>`,
trash:`<path d="M8 8l5 45q1 4 17 4t17-4l5-45z" fill="#f0f0fc"/><ellipse cx="30" cy="8" rx="22" ry="5" fill="url(#lw)" stroke="${W}" stroke-width="1.200"/>`
};
class DockApp extends HTMLElement{
  connectedCallback(){
    this.attachShadow({mode:'open'}).innerHTML=`<style>:host{display:flex;flex-direction:column;align-items:center;width:67.300px;flex:none}svg{display:block;overflow:visible}i{width:4px;height:4px;border-radius:50%;margin-top:6px;background:#2a2040}</style>
<svg width="60" height="60" viewBox="0 0 60 60"><defs>${tex(W,L,'wl')}${tex(L,W,'lw')}${tex(P,K,'pk')}<pattern id="lp" width="2" height="2" patternUnits="userSpaceOnUse"><rect width="2" height="2" fill="${P}"/><rect width="1" height="1" fill="${L}"/><rect x="1" y="1" width="1" height="1" fill="${L}"/></pattern></defs>${APPS[this.getAttribute('app')]}</svg>${this.hasAttribute('open')?'<i></i>':''}`;
  }
}
customElements.define('dock-app',DockApp);
const app=(n,o)=>`<dock-app app="${n}"${o?' open':''}></dock-app>`;
define('app-dock',`<style>
:host{display:block;height:89px;position:relative;z-index:0;flex:none}
.d{display:flex;align-items:flex-start;width:1548px;height:79px;margin:5px 0 0 57px;border-radius:22px;overflow:hidden;position:relative;z-index:0;padding:6px 0 0 3.500px;box-sizing:border-box;border-bottom:1px solid #9292da}
hr{border:0;width:2px;height:60px;background:#6c47ae;margin:5px 14px}
.w{display:flow-root}
</style><dither-fill field="desk" w="1662" h="89"></dither-fill><div class="w"><div class="d"><dither-fill field="dock" w="1548" h="79"></dither-fill>
${app('finder',1)}${['launch','phone','prefs','music','safari'].map(n=>app(n)).join('')}${app('chrome',1)}${app('term',1)}${app('gpt')}${app('vm',1)}${app('ij')}${app('go')}${app('code',1)}${app('typora')}${app('notion')}${app('bolt',1)}<span style="width:30px;flex:none"></span>${app('qq',1)}${app('obs',1)}${app('exec')}<hr>${app('down')}${app('win')}${app('trash')}</div></div>`);

define('desk-top',`<style>:host{display:flex;flex-direction:column;width:1662px;height:1080px;overflow:hidden;background:#6c47ae}</style><menu-bar></menu-bar><browser-window></browser-window><app-dock></app-dock>`);
</script>
</body>
</html>
